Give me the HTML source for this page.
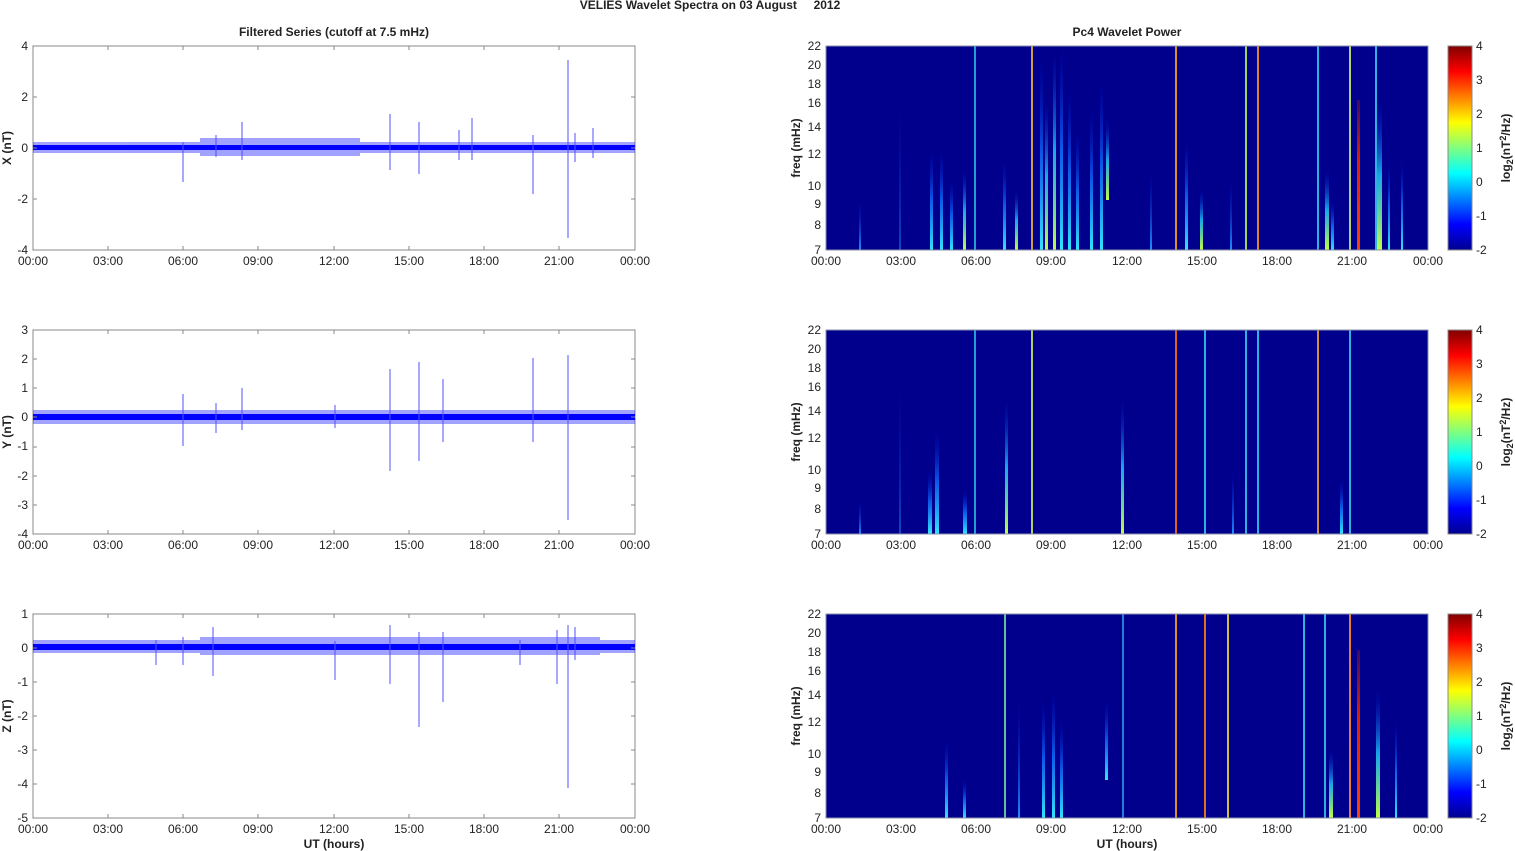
<!DOCTYPE html>
<html><head><meta charset="utf-8"><style>
html,body{margin:0;padding:0;background:#fff;width:1515px;height:851px;overflow:hidden}
text{font-family:"Liberation Sans",Arial,sans-serif;font-size:12px;fill:#222}
.b{font-weight:bold}
</style></head><body>
<svg width="1515" height="851" viewBox="0 0 1515 851" xmlns="http://www.w3.org/2000/svg">
<defs>
<linearGradient id="jet" x1="0" y1="1" x2="0" y2="0">
<stop offset="0" stop-color="#00008f"/><stop offset="0.125" stop-color="#0000ff"/><stop offset="0.375" stop-color="#00ffff"/><stop offset="0.625" stop-color="#ffff00"/><stop offset="0.875" stop-color="#ff0000"/><stop offset="1" stop-color="#800000"/>
</linearGradient>
<linearGradient id="pc" x1="0" y1="1" x2="0" y2="0"><stop offset="0" stop-color="#30e8ff"/><stop offset="0.5" stop-color="#1070ff" stop-opacity="0.8"/><stop offset="1" stop-color="#0010d0" stop-opacity="0"/></linearGradient>
<linearGradient id="pg" x1="0" y1="1" x2="0" y2="0"><stop offset="0" stop-color="#c0ff40"/><stop offset="0.5" stop-color="#20d0ff" stop-opacity="0.8"/><stop offset="1" stop-color="#0020e0" stop-opacity="0"/></linearGradient>
<linearGradient id="pb" x1="0" y1="1" x2="0" y2="0"><stop offset="0" stop-color="#2090ff"/><stop offset="1" stop-color="#0010d0" stop-opacity="0"/></linearGradient>
<linearGradient id="py" x1="0" y1="1" x2="0" y2="0"><stop offset="0" stop-color="#ff4000"/><stop offset="0.6" stop-color="#e02000"/><stop offset="1" stop-color="#d02000" stop-opacity="0.3"/></linearGradient>
</defs>

<text x="710" y="9" class="b" text-anchor="middle" xml:space="preserve">VELIES Wavelet Spectra on 03 August     2012</text>
<text x="334" y="36" class="b" text-anchor="middle">Filtered Series (cutoff at 7.5 mHz)</text>
<text x="1127" y="36" class="b" text-anchor="middle">Pc4 Wavelet Power</text>

<g>
<rect x="33" y="46" width="602" height="204" fill="#fff" stroke="#888" stroke-width="1"/>
<rect x="33" y="330" width="602" height="204" fill="#fff" stroke="#888" stroke-width="1"/>
<rect x="33" y="614" width="602" height="204" fill="#fff" stroke="#888" stroke-width="1"/>
</g>
<g fill="#3030ff" opacity="0.45">
<rect x="33" y="142" width="602" height="11"/>
<rect x="200" y="138" width="160" height="18"/>
<rect x="33" y="410" width="602" height="14"/>
<rect x="33" y="640" width="602" height="13"/>
<rect x="200" y="637" width="400" height="18"/>
</g>
<g fill="#0000ff">
<rect x="33" y="145" width="602" height="5"/>
<rect x="33" y="414" width="602" height="6"/>
<rect x="33" y="644" width="602" height="6"/>
</g>
<g stroke="#5050ff" stroke-width="1">
<line x1="183" y1="142" x2="183" y2="182"/><line x1="216" y1="135" x2="216" y2="157"/><line x1="242" y1="122" x2="242" y2="160"/>
<line x1="390" y1="114" x2="390" y2="170"/><line x1="419" y1="122" x2="419" y2="174"/><line x1="459" y1="130" x2="459" y2="160"/>
<line x1="472" y1="118" x2="472" y2="160"/><line x1="533" y1="135" x2="533" y2="194"/><line x1="568" y1="60" x2="568" y2="238"/>
<line x1="593" y1="128" x2="593" y2="158"/><line x1="575" y1="133" x2="575" y2="162"/>
<line x1="183" y1="394" x2="183" y2="446"/><line x1="216" y1="403" x2="216" y2="433"/><line x1="242" y1="388" x2="242" y2="430"/>
<line x1="335" y1="405" x2="335" y2="428"/><line x1="390" y1="369" x2="390" y2="471"/><line x1="419" y1="362" x2="419" y2="461"/>
<line x1="443" y1="379" x2="443" y2="442"/><line x1="533" y1="358" x2="533" y2="442"/><line x1="568" y1="355" x2="568" y2="520"/>
<line x1="156" y1="640" x2="156" y2="665"/><line x1="183" y1="637" x2="183" y2="665"/><line x1="213" y1="627" x2="213" y2="676"/>
<line x1="335" y1="641" x2="335" y2="680"/><line x1="390" y1="625" x2="390" y2="684"/><line x1="419" y1="632" x2="419" y2="727"/>
<line x1="443" y1="632" x2="443" y2="702"/><line x1="520" y1="640" x2="520" y2="665"/><line x1="557" y1="630" x2="557" y2="684"/>
<line x1="568" y1="625" x2="568" y2="788"/><line x1="575" y1="627" x2="575" y2="660"/>
</g>
<g stroke="#888">
<path d="M108 46v4M183 46v4M258 46v4M334 46v4M409 46v4M484 46v4M559 46v4M108 250v-4M183 250v-4M258 250v-4M334 250v-4M409 250v-4M484 250v-4M559 250v-4"/>
<path d="M108 330v4M183 330v4M258 330v4M334 330v4M409 330v4M484 330v4M559 330v4M108 534v-4M183 534v-4M258 534v-4M334 534v-4M409 534v-4M484 534v-4M559 534v-4"/>
<path d="M108 614v4M183 614v4M258 614v4M334 614v4M409 614v4M484 614v4M559 614v4M108 818v-4M183 818v-4M258 818v-4M334 818v-4M409 818v-4M484 818v-4M559 818v-4"/>
</g>
<g text-anchor="middle">
<text x="33" y="265">00:00</text><text x="108" y="265">03:00</text><text x="183" y="265">06:00</text><text x="258" y="265">09:00</text><text x="334" y="265">12:00</text><text x="409" y="265">15:00</text><text x="484" y="265">18:00</text><text x="559" y="265">21:00</text><text x="635" y="265">00:00</text>
<text x="33" y="549">00:00</text><text x="108" y="549">03:00</text><text x="183" y="549">06:00</text><text x="258" y="549">09:00</text><text x="334" y="549">12:00</text><text x="409" y="549">15:00</text><text x="484" y="549">18:00</text><text x="559" y="549">21:00</text><text x="635" y="549">00:00</text>
<text x="33" y="833">00:00</text><text x="108" y="833">03:00</text><text x="183" y="833">06:00</text><text x="258" y="833">09:00</text><text x="334" y="833">12:00</text><text x="409" y="833">15:00</text><text x="484" y="833">18:00</text><text x="559" y="833">21:00</text><text x="635" y="833">00:00</text>
<text x="334" y="848" class="b">UT (hours)</text>
</g>
<g text-anchor="end">
<text x="28" y="50">4</text><text x="28" y="101">2</text><text x="28" y="152">0</text><text x="28" y="203">-2</text><text x="28" y="254">-4</text>
<text x="28" y="334">3</text><text x="28" y="363">2</text><text x="28" y="392">1</text><text x="28" y="421">0</text><text x="28" y="450">-1</text><text x="28" y="480">-2</text><text x="28" y="509">-3</text><text x="28" y="538">-4</text>
<text x="28" y="618">1</text><text x="28" y="652">0</text><text x="28" y="686">-1</text><text x="28" y="720">-2</text><text x="28" y="754">-3</text><text x="28" y="788">-4</text><text x="28" y="822">-5</text>
</g>
<g stroke="#888"><path d="M33 97h4M33 148h4M33 199h4M635 97h-4M635 148h-4M635 199h-4M33 359h4M33 388h4M33 417h4M33 447h4M33 476h4M33 505h4M635 359h-4M635 388h-4M635 417h-4M635 447h-4M635 476h-4M635 505h-4M33 648h4M33 682h4M33 716h4M33 750h4M33 784h4M635 648h-4M635 682h-4M635 716h-4M635 750h-4M635 784h-4"/></g>
<text class="b" transform="translate(11,148) rotate(-90)" text-anchor="middle">X (nT)</text>
<text class="b" transform="translate(11,432) rotate(-90)" text-anchor="middle">Y (nT)</text>
<text class="b" transform="translate(11,716) rotate(-90)" text-anchor="middle">Z (nT)</text>

<rect x="826" y="46" width="602" height="204" fill="#00008c"/>
<rect x="826" y="330" width="602" height="204" fill="#00008c"/>
<rect x="826" y="614" width="602" height="204" fill="#00008c"/>

<g>
<rect x="859" y="200" width="2" height="50" fill="url(#pb)"/>
<rect x="899" y="100" width="2" height="150" fill="url(#pb)" opacity="0.5"/>
<rect x="930" y="150" width="3" height="100" fill="url(#pc)"/>
<rect x="940" y="150" width="3" height="100" fill="url(#pc)"/>
<rect x="950" y="180" width="3" height="70" fill="url(#pc)"/>
<rect x="963" y="170" width="3" height="80" fill="url(#pg)"/>
<rect x="1003" y="160" width="3" height="90" fill="url(#pc)"/>
<rect x="1015" y="190" width="3" height="60" fill="url(#pg)"/>
<rect x="1040" y="60" width="3" height="190" fill="url(#pc)"/>
<rect x="1045" y="100" width="3" height="150" fill="url(#pg)"/>
<rect x="1053" y="50" width="3" height="200" fill="url(#pg)"/>
<rect x="1060" y="46" width="3" height="204" fill="url(#pc)"/>
<rect x="1068" y="90" width="3" height="160" fill="url(#pc)"/>
<rect x="1076" y="130" width="3" height="120" fill="url(#pc)"/>
<rect x="1090" y="110" width="3" height="140" fill="url(#pc)"/>
<rect x="1100" y="80" width="3" height="170" fill="url(#pc)"/>
<rect x="1106" y="120" width="3" height="80" fill="url(#pg)"/>
<rect x="1150" y="170" width="2" height="80" fill="url(#pb)"/>
<rect x="1185" y="140" width="3" height="110" fill="url(#pc)"/>
<rect x="1200" y="190" width="3" height="60" fill="url(#pg)"/>
<rect x="1230" y="180" width="2" height="70" fill="url(#pb)"/>
<rect x="1325" y="170" width="4" height="80" fill="url(#pg)"/>
<rect x="1331" y="200" width="3" height="50" fill="url(#pc)"/>
<rect x="1377" y="100" width="5" height="150" fill="url(#pg)"/>
<rect x="1388" y="160" width="2" height="90" fill="url(#pc)"/>
<rect x="1401" y="160" width="2" height="90" fill="url(#pc)"/>
<rect x="1357" y="100" width="3" height="150" fill="url(#py)"/>
</g>
<g>
<rect x="974" y="46" width="2" height="204" fill="#20a0d0"/>
<rect x="1031" y="46" width="2" height="204" fill="#d0a040"/>
<rect x="1175" y="46" width="2" height="204" fill="#e09020"/>
<rect x="1245" y="46" width="2" height="204" fill="#a0d060"/>
<rect x="1257" y="46" width="2" height="204" fill="#e08030"/>
<rect x="1317" y="46" width="2" height="204" fill="#30b0e0"/>
<rect x="1349" y="46" width="2" height="204" fill="#b0d070"/>
<rect x="1375" y="46" width="2" height="204" fill="#30b0e0"/>
</g>

<g>
<rect x="859" y="500" width="2" height="34" fill="url(#pb)"/>
<rect x="899" y="380" width="2" height="154" fill="url(#pb)" opacity="0.5"/>
<rect x="928" y="470" width="4" height="64" fill="url(#pc)"/>
<rect x="935" y="430" width="4" height="104" fill="url(#pc)"/>
<rect x="963" y="490" width="4" height="44" fill="url(#pc)"/>
<rect x="1005" y="400" width="3" height="134" fill="url(#pg)"/>
<rect x="1121" y="400" width="3" height="134" fill="url(#pg)"/>
<rect x="1340" y="480" width="3" height="54" fill="url(#pc)"/>
<rect x="1232" y="470" width="2" height="64" fill="url(#pb)"/>
</g>
<g>
<rect x="974" y="330" width="2" height="204" fill="#20a0d0"/>
<rect x="1031" y="330" width="2" height="204" fill="#b0d060"/>
<rect x="1175" y="330" width="2" height="204" fill="#e06020"/>
<rect x="1204" y="330" width="2" height="204" fill="#30b0e0"/>
<rect x="1245" y="330" width="2" height="204" fill="#30b0e0"/>
<rect x="1257" y="330" width="2" height="204" fill="#30b0e0"/>
<rect x="1317" y="330" width="2" height="204" fill="#d09040"/>
<rect x="1349" y="330" width="2" height="204" fill="#30b0e0"/>
</g>

<g>
<rect x="945" y="740" width="3" height="78" fill="url(#pc)"/>
<rect x="963" y="780" width="3" height="38" fill="url(#pc)"/>
<rect x="1018" y="700" width="2" height="118" fill="url(#pb)"/>
<rect x="1042" y="700" width="3" height="118" fill="url(#pc)"/>
<rect x="1052" y="690" width="3" height="128" fill="url(#pc)"/>
<rect x="1060" y="720" width="3" height="98" fill="url(#pc)"/>
<rect x="1105" y="700" width="3" height="80" fill="url(#pc)"/>
<rect x="1329" y="750" width="4" height="68" fill="url(#pg)"/>
<rect x="1376" y="690" width="4" height="128" fill="url(#pg)"/>
<rect x="1395" y="720" width="2" height="98" fill="url(#pc)"/>
<rect x="1357" y="650" width="3" height="168" fill="url(#py)"/>
</g>
<g>
<rect x="1004" y="614" width="2" height="204" fill="#60c090"/>
<rect x="1122" y="614" width="2" height="204" fill="#2080d0"/>
<rect x="1175" y="614" width="2" height="204" fill="#e09020"/>
<rect x="1204" y="614" width="2" height="204" fill="#e07020"/>
<rect x="1227" y="614" width="2" height="204" fill="#d0c040"/>
<rect x="1303" y="614" width="2" height="204" fill="#30b0e0"/>
<rect x="1324" y="614" width="2" height="204" fill="#30b0e0"/>
<rect x="1349" y="614" width="2" height="204" fill="#e08030"/>
</g>

<g fill="none" stroke="#8890a8" stroke-width="1">
<rect x="826" y="46" width="602" height="204"/><rect x="826" y="330" width="602" height="204"/><rect x="826" y="614" width="602" height="204"/>
</g>

<g text-anchor="end">
<text x="821" y="50">22</text><text x="821" y="69">20</text><text x="821" y="107">16</text><text x="821" y="88">18</text><text x="821" y="131">14</text><text x="821" y="158">12</text><text x="821" y="190">10</text><text x="821" y="208">9</text><text x="821" y="229">8</text><text x="821" y="254">7</text>
<text x="821" y="334">22</text><text x="821" y="353">20</text><text x="821" y="372">18</text><text x="821" y="391">16</text><text x="821" y="415">14</text><text x="821" y="442">12</text><text x="821" y="474">10</text><text x="821" y="492">9</text><text x="821" y="513">8</text><text x="821" y="538">7</text>
<text x="821" y="618">22</text><text x="821" y="637">20</text><text x="821" y="656">18</text><text x="821" y="675">16</text><text x="821" y="699">14</text><text x="821" y="726">12</text><text x="821" y="758">10</text><text x="821" y="776">9</text><text x="821" y="797">8</text><text x="821" y="822">7</text>
</g>
<g text-anchor="middle">
<text x="826" y="265">00:00</text><text x="901" y="265">03:00</text><text x="976" y="265">06:00</text><text x="1051" y="265">09:00</text><text x="1127" y="265">12:00</text><text x="1202" y="265">15:00</text><text x="1277" y="265">18:00</text><text x="1352" y="265">21:00</text><text x="1428" y="265">00:00</text>
<text x="826" y="549">00:00</text><text x="901" y="549">03:00</text><text x="976" y="549">06:00</text><text x="1051" y="549">09:00</text><text x="1127" y="549">12:00</text><text x="1202" y="549">15:00</text><text x="1277" y="549">18:00</text><text x="1352" y="549">21:00</text><text x="1428" y="549">00:00</text>
<text x="826" y="833">00:00</text><text x="901" y="833">03:00</text><text x="976" y="833">06:00</text><text x="1051" y="833">09:00</text><text x="1127" y="833">12:00</text><text x="1202" y="833">15:00</text><text x="1277" y="833">18:00</text><text x="1352" y="833">21:00</text><text x="1428" y="833">00:00</text>
<text x="1127" y="848" class="b">UT (hours)</text>
</g>
<text class="b" transform="translate(800,148) rotate(-90)" text-anchor="middle">freq (mHz)</text>
<text class="b" transform="translate(800,432) rotate(-90)" text-anchor="middle">freq (mHz)</text>
<text class="b" transform="translate(800,716) rotate(-90)" text-anchor="middle">freq (mHz)</text>

<g>
<rect x="1448" y="46" width="24" height="204" fill="url(#jet)" stroke="#888"/>
<rect x="1448" y="330" width="24" height="204" fill="url(#jet)" stroke="#888"/>
<rect x="1448" y="614" width="24" height="204" fill="url(#jet)" stroke="#888"/>
</g>
<g>
<text x="1476" y="50">4</text><text x="1476" y="84">3</text><text x="1476" y="118">2</text><text x="1476" y="152">1</text><text x="1476" y="186">0</text><text x="1476" y="220">-1</text><text x="1476" y="254">-2</text>
<text x="1476" y="334">4</text><text x="1476" y="368">3</text><text x="1476" y="402">2</text><text x="1476" y="436">1</text><text x="1476" y="470">0</text><text x="1476" y="504">-1</text><text x="1476" y="538">-2</text>
<text x="1476" y="618">4</text><text x="1476" y="652">3</text><text x="1476" y="686">2</text><text x="1476" y="720">1</text><text x="1476" y="754">0</text><text x="1476" y="788">-1</text><text x="1476" y="822">-2</text>
</g>
<text class="b" transform="translate(1510,148) rotate(-90)" text-anchor="middle">log<tspan font-size="9" dy="3">2</tspan><tspan dy="-3">(nT</tspan><tspan font-size="9" dy="-4">2</tspan><tspan dy="4">/Hz)</tspan></text>
<text class="b" transform="translate(1510,432) rotate(-90)" text-anchor="middle">log<tspan font-size="9" dy="3">2</tspan><tspan dy="-3">(nT</tspan><tspan font-size="9" dy="-4">2</tspan><tspan dy="4">/Hz)</tspan></text>
<text class="b" transform="translate(1510,716) rotate(-90)" text-anchor="middle">log<tspan font-size="9" dy="3">2</tspan><tspan dy="-3">(nT</tspan><tspan font-size="9" dy="-4">2</tspan><tspan dy="4">/Hz)</tspan></text>
</svg>
</body></html>
